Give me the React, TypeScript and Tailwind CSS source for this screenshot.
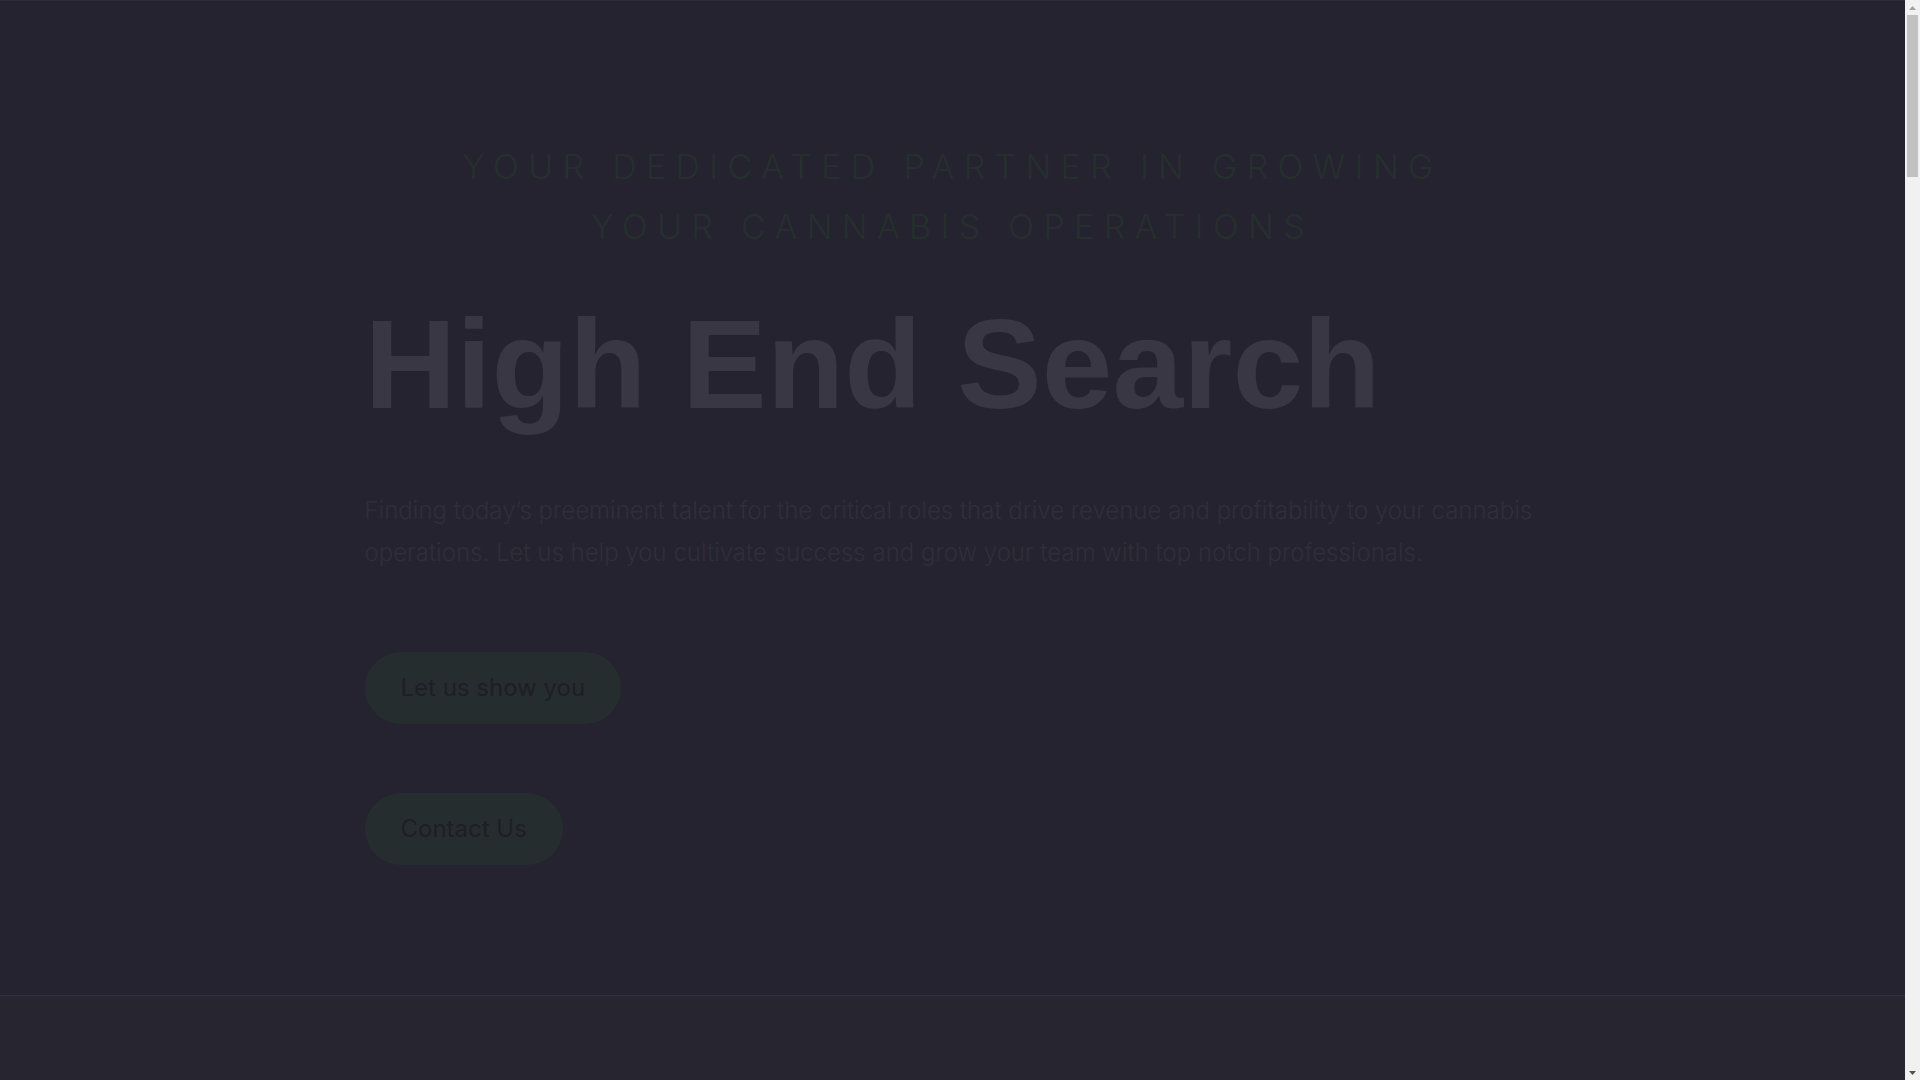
import React from 'react';

const inter = "font-['Inter','Noto_Sans',sans-serif]";

function Scrollbar() {
  return (
    <div className="w-[15px] shrink-0 bg-[#f1f1f1] flex flex-col">
      <div className="h-[15px] flex items-center justify-center">
        <svg width="7" height="4" viewBox="0 0 7 4">
          <path d="M3.5 0 L7 4 L0 4 Z" fill="#a3a3a3" />
        </svg>
      </div>
      <div className="mx-[2px] h-[162px] bg-[#c1c1c1]" />
      <div className="flex-1" />
      <div className="h-[15px] flex items-center justify-center">
        <svg width="7" height="4" viewBox="0 0 7 4">
          <path d="M0 0 L7 0 L3.5 4 Z" fill="#505050" />
        </svg>
      </div>
    </div>
  );
}

export default function App() {
  return (
    <div className="flex h-screen overflow-hidden bg-[#25232f]">
      <div className="flex-1 min-w-0">
        {/* Hero */}
        <section className="border-t border-[#2f2d3a] border-b border-b-[#34323e] pt-[136px] pb-[130px]">
          <div className="max-w-[1200px] mx-auto px-3">
            <p className={`${inter} text-center text-[34px] leading-[60px] font-light tracking-[9.3px] uppercase text-[#252f2e]`}>
              Your dedicated partner in growing
              <br />
              your cannabis operations
            </p>

            <h1 className="mt-[44px] font-['Liberation_Sans',Arial,sans-serif] font-bold text-[127px] leading-none text-[#393744]">
              High End Search
            </h1>

            <p className={`${inter} mt-[62px] text-[24px] leading-[42px] font-light text-[#302e3b]`}>
              Finding today’s preeminent talent for the critical roles that drive revenue and profitability to your cannabis operations. Let us help you cultivate success and grow your team with top notch professionals.
            </p>

            <div className="mt-[78px] flex flex-col items-start gap-[69px]">
              <button className={`${inter} rounded-full bg-[#262d2f] px-[36px] py-[24px] text-[24px] leading-[24px] font-normal text-[#1f1e27]`}>
                Let us show you
              </button>
              <button className={`${inter} rounded-full bg-[#262d2f] px-[36px] py-[24px] text-[24px] leading-[24px] font-normal text-[#1f1e27]`}>
                Contact Us
              </button>
            </div>
          </div>
        </section>

        {/* Next section (below the fold) */}
        <section className="bg-[#272530] h-[6000px]" />
      </div>
      <Scrollbar />
    </div>
  );
}
